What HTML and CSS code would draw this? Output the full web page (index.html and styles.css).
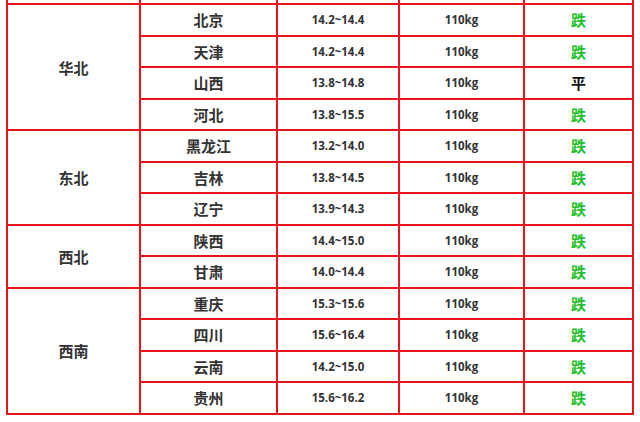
FILE: index.html
```html
<!DOCTYPE html>
<html lang="zh">
<head>
<meta charset="utf-8">
<link rel="stylesheet" href="styles.css">
</head>
<body>
<table class="price">
  <colgroup>
    <col class="c1"><col class="c2"><col class="c3"><col class="c4"><col class="c5">
  </colgroup>
  <tr class="cut"><td></td><td></td><td></td><td></td><td></td></tr>
  <tr><td class="region" rowspan="4">华北</td><td class="city">北京</td><td class="num">14.2~14.4</td><td class="num">110kg</td><td class="down">跌</td></tr>
  <tr><td class="city">天津</td><td class="num">14.2~14.4</td><td class="num">110kg</td><td class="down">跌</td></tr>
  <tr><td class="city">山西</td><td class="num">13.8~14.8</td><td class="num">110kg</td><td class="flat">平</td></tr>
  <tr><td class="city">河北</td><td class="num">13.8~15.5</td><td class="num">110kg</td><td class="down">跌</td></tr>
  <tr><td class="region" rowspan="3">东北</td><td class="city">黑龙江</td><td class="num">13.2~14.0</td><td class="num">110kg</td><td class="down">跌</td></tr>
  <tr><td class="city">吉林</td><td class="num">13.8~14.5</td><td class="num">110kg</td><td class="down">跌</td></tr>
  <tr><td class="city">辽宁</td><td class="num">13.9~14.3</td><td class="num">110kg</td><td class="down">跌</td></tr>
  <tr><td class="region" rowspan="2">西北</td><td class="city">陕西</td><td class="num">14.4~15.0</td><td class="num">110kg</td><td class="down">跌</td></tr>
  <tr><td class="city">甘肃</td><td class="num">14.0~14.4</td><td class="num">110kg</td><td class="down">跌</td></tr>
  <tr><td class="region" rowspan="4">西南</td><td class="city">重庆</td><td class="num">15.3~15.6</td><td class="num">110kg</td><td class="down">跌</td></tr>
  <tr><td class="city">四川</td><td class="num">15.6~16.4</td><td class="num">110kg</td><td class="down">跌</td></tr>
  <tr><td class="city">云南</td><td class="num">14.2~15.0</td><td class="num">110kg</td><td class="down">跌</td></tr>
  <tr><td class="city">贵州</td><td class="num">15.6~16.2</td><td class="num">110kg</td><td class="down">跌</td></tr>
</table>
</body>
</html>
```

FILE: styles.css
```css
html, body {
  margin: 0;
  padding: 0;
  background: #ffffff;
}
body {
  padding: 0 6px 0 6px;
  font-family: "Noto Sans CJK SC", "Open Sans", sans-serif;
  color: #333333;
}
.price {
  width: 626px;
  border-collapse: collapse;
  table-layout: fixed;
}
.c1 { width: 133px; }
.c2 { width: 137px; }
.c3 { width: 122px; }
.c4 { width: 125px; }
.c5 { width: 109px; }
.price td {
  border: 2px solid #e8161c;
  height: 29.5px;
  padding: 0;
  text-align: center;
  vertical-align: middle;
  line-height: 1;
}
.price tr.cut td {
  height: 3px;
  border-top: none;
}
.region, .city {
  font-size: 15px;
  font-weight: 700;
  color: #333333;
}
.num {
  font-family: "Open Sans", "Noto Sans", sans-serif;
  font-size: 11.5px;
  font-weight: 700;
  color: #333333;
}
.down {
  font-size: 15px;
  font-weight: 700;
  color: #22c02a;
}
.flat {
  font-size: 15px;
  font-weight: 700;
  color: #111111;
}
```
